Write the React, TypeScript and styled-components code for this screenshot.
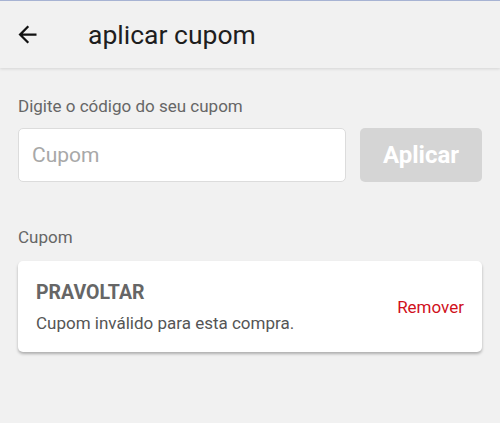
import React from "react";
import styled, { createGlobalStyle } from "styled-components";

const Global = createGlobalStyle`
  html, body { margin: 0; padding: 0; background: #f1f1f1; }
  body { font-family: Roboto, "Noto Sans", Arial, sans-serif; }
  * { box-sizing: border-box; }
`;

const Page = styled.div`
  width: 500px;
  height: 423px;
  background: #f1f1f1;
  border-top: 1px solid #a7b3d3;
  overflow: hidden;
`;

const Header = styled.header`
  height: 67px;
  display: flex;
  align-items: center;
  background: #f1f1f1;
  box-shadow: 0 1px 3px rgba(0, 0, 0, 0.12);
  position: relative;
  z-index: 1;
`;

const BackButton = styled.button`
  width: 54px;
  height: 54px;
  padding: 0;
  border: none;
  background: none;
  display: flex;
  align-items: center;
  justify-content: center;
  color: #111;
`;

const Title = styled.h1`
  margin: 0 0 0 34px;
  font-size: 26.5px;
  font-weight: 400;
  color: #1e1e1e;
`;

const Content = styled.main`
  padding: 28px 18px 0 18px;
  display: flex;
  flex-direction: column;
`;

const Label = styled.div`
  font-size: 17px;
  line-height: 21px;
  color: #666;
`;

const Row = styled.div`
  margin-top: 11px;
  display: flex;
  gap: 14px;
`;

const Input = styled.input`
  flex: 1;
  height: 54px;
  border: 1px solid #dcdcdc;
  border-radius: 5px;
  background: #fff;
  padding: 0 13px;
  font-family: inherit;
  font-size: 21px;
  color: #333;
  outline: none;
  &::placeholder { color: #a8a8a8; }
`;

const ApplyButton = styled.button`
  width: 122px;
  height: 54px;
  border: none;
  border-radius: 5px;
  background: #d5d5d5;
  color: #fff;
  font-family: inherit;
  font-weight: 700;
  font-size: 24px;
  padding: 0;
`;

const SectionLabel = styled(Label)`
  margin-top: 45px;
`;

const Card = styled.div`
  margin-top: 13px;
  height: 91px;
  background: #fff;
  border-radius: 5px;
  box-shadow: 0 2px 3px rgba(0, 0, 0, 0.28);
  display: flex;
  align-items: center;
  padding: 0 18px;
`;

const CardBody = styled.div`
  flex: 1;
  display: flex;
  flex-direction: column;
  gap: 8px;
  padding-top: 2px;
`;

const Code = styled.div`
  font-size: 19.5px;
  line-height: 24px;
  font-weight: 700;
  color: #666;
`;

const Message = styled.div`
  font-size: 17px;
  line-height: 21px;
  color: #555;
`;

const RemoveLink = styled.button`
  border: none;
  background: none;
  padding: 0;
  font-family: inherit;
  font-size: 17px;
  color: #d0101b;
`;

export default function App() {
  return (
    <Page>
      <Global />
      <Header>
        <BackButton aria-label="voltar">
          <svg width="27" height="27" viewBox="0 0 24 24">
            <path fill="currentColor" d="M20 11H7.83l5.59-5.59L12 4l-8 8 8 8 1.41-1.41L7.83 13H20v-2z" />
          </svg>
        </BackButton>
        <Title>aplicar cupom</Title>
      </Header>
      <Content>
        <Label>Digite o código do seu cupom</Label>
        <Row>
          <Input placeholder="Cupom" />
          <ApplyButton disabled>Aplicar</ApplyButton>
        </Row>
        <SectionLabel>Cupom</SectionLabel>
        <Card>
          <CardBody>
            <Code>PRAVOLTAR</Code>
            <Message>Cupom inválido para esta compra.</Message>
          </CardBody>
          <RemoveLink>Remover</RemoveLink>
        </Card>
      </Content>
    </Page>
  );
}
